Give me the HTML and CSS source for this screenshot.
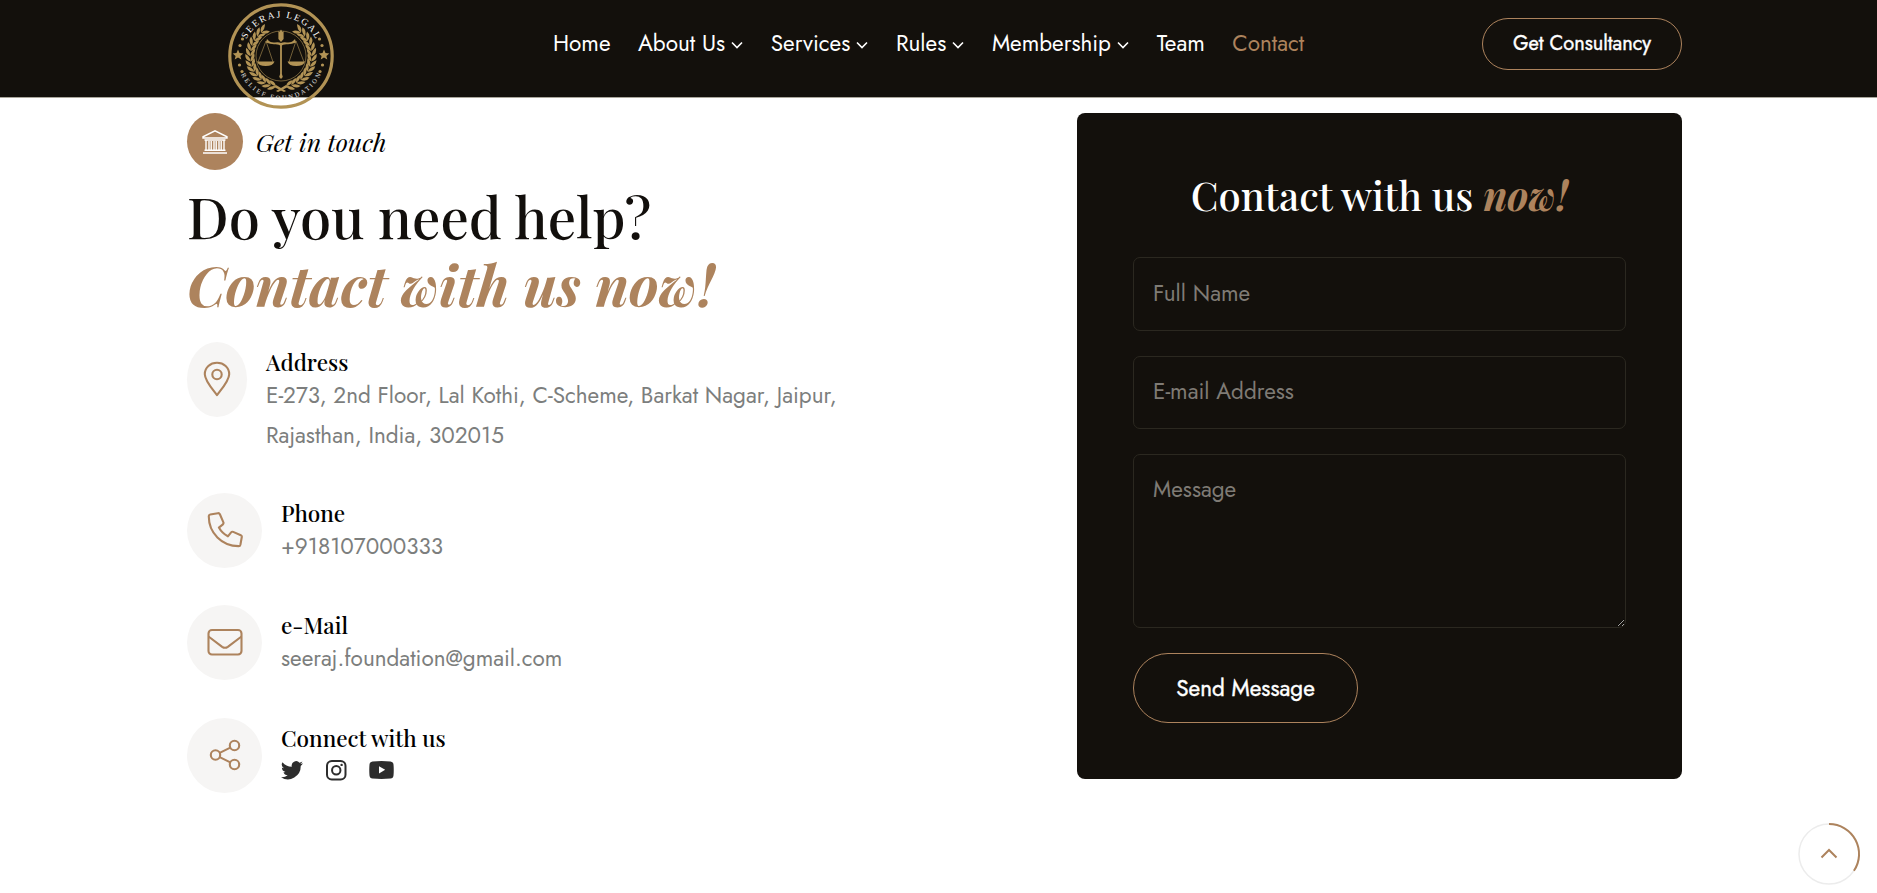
FILE: index.html
```html
<!DOCTYPE html>
<html lang="en">
<head>
<meta charset="utf-8">
<title>Contact - Seeraj Legal Relief Foundation</title>
<link rel="stylesheet" href="styles.css">
</head>
<body>
<header class="header">
  <div class="container header-row">
    <a class="logo" href="#" aria-label="Seeraj Legal Relief Foundation">
      <svg width="106" height="106" viewBox="-53 -53 106 106">
        <defs>
          <path id="arc-top" d="M-38.5 0A38.5 38.5 0 0 1 38.5 0"/>
          <path id="arc-bottom" d="M-44 0A44 44 0 0 0 44 0"/>
          <g id="leaf"><path d="M-30.500 3.500Q-36.500 1.500-35.500-4.500Q-31-2-30.500 3.500Z"/><path d="M-30.500 3.500Q-31-2-26.500-4.500Q-25.500 1-30.500 3.500Z"/></g>
          <g id="branch">
            <use href="#leaf" transform="rotate(-74)"/><use href="#leaf" transform="rotate(-64)"/><use href="#leaf" transform="rotate(-54)"/><use href="#leaf" transform="rotate(-44)"/><use href="#leaf" transform="rotate(-34)"/><use href="#leaf" transform="rotate(-24)"/><use href="#leaf" transform="rotate(-14)"/><use href="#leaf" transform="rotate(-4)"/><use href="#leaf" transform="rotate(6)"/><use href="#leaf" transform="rotate(16)"/><use href="#leaf" transform="rotate(26)"/><use href="#leaf" transform="rotate(36)"/><use href="#leaf" transform="rotate(46)"/><use href="#leaf" transform="rotate(56)"/>
            <path d="M-5 29L5 35L3 36L-7 31Z"/>
          </g>
        </defs>
        <circle r="51.200" fill="none" stroke="#b29355" stroke-width="3.200"/>
        <g fill="#b29355">
          <use href="#branch"/>
          <use href="#branch" transform="scale(-1 1)"/>
          <path id="star" d="M-43-6.500L-41.500-2.900L-37.700-2.600L-40.600-.1L-39.700 3.600L-43 1.600L-46.300 3.600L-45.400-.1L-48.300-2.600L-44.500-2.900Z"/>
          <use href="#star" transform="scale(-1 1)"/>
          <g id="dots"><circle cx="-38.500" cy="-17" r="1.600"/><circle cx="-41" cy="-10.500" r="1.600"/><circle cx="-41.500" cy="9" r="1.600"/><circle cx="-39" cy="15.500" r="1.600"/></g>
          <use href="#dots" transform="scale(-1 1)"/>
          <path d="M-.9-11H.9V18L1.800 21L0 23L-1.800 21L-.9 18ZM-2.600-25L-1.500-24L0-26.500L1.500-24L2.600-25V-17L0-14L-2.600-17Z"/>
          <path d="M-24 5.500H-6.500Q-8 10-15.300 10Q-22.500 10-24 5.500ZM24 5.500H6.500Q8 10 15.300 10Q22.500 10 24 5.500Z"/>
          <path d="M-14-17Q-11-13-6-13.500Q-2-14 0-13Q2-14 6-13.500Q11-13 14-17L15-13.500Q10-11.500 6-11.800Q2-12 0-10Q-2-12-6-11.800Q-10-11.500-15-13.500Z"/>
        </g>
        <g fill="none" stroke="#b29355" stroke-width=".6"><circle r="25"/><path d="M-15-15L-23 6M-15-15L-8 6M15-15L23 6M15-15L8 6"/></g>
        <text class="logo-top"><textPath href="#arc-top" startOffset="50%" text-anchor="middle" textLength="86">SEERAJ LEGAL</textPath></text>
        <text class="logo-bottom"><textPath href="#arc-bottom" startOffset="50%" text-anchor="middle" textLength="100">RELIEF FOUNDATION</textPath></text>
      </svg>
    </a>
    <nav class="nav">
      <a href="#">Home</a>
      <a href="#">About Us<svg class="chev" viewBox="0 0 12 8"><path d="M1 1.500L6 6.500L11 1.500"/></svg></a>
      <a href="#">Services<svg class="chev" viewBox="0 0 12 8"><path d="M1 1.500L6 6.500L11 1.500"/></svg></a>
      <a href="#">Rules<svg class="chev" viewBox="0 0 12 8"><path d="M1 1.500L6 6.500L11 1.500"/></svg></a>
      <a href="#">Membership<svg class="chev" viewBox="0 0 12 8"><path d="M1 1.500L6 6.500L11 1.500"/></svg></a>
      <a href="#">Team</a>
      <a href="#" class="active">Contact</a>
    </nav>
    <a class="btn btn-top" href="#">Get Consultancy</a>
  </div>
</header>

<main class="container main">
  <section class="info">
    <div class="eyebrow">
      <span class="eyebrow-icon"><svg width="26" height="24" viewBox="0 0 26 24"><path d="M1 8V6.800L13 .8L25 6.800V8ZM2.500 10H23.500M4 10.500V19.500M22 10.500V19.500M7 11V19.500M9.200 11V19.500M12 11V19.500M14.200 11V19.500M17 11V19.500M19.200 11V19.500M2.500 20.200H23.500M1 23H25"/></svg></span>
      <span class="eyebrow-text">Get in touch</span>
    </div>
    <h1 class="title">Do you need help?<br><em class="title-b">Contact with us now!</em></h1>
    <ul class="list">
      <li class="item item-address">
        <span class="disc disc-narrow"><svg width="36" height="36" viewBox="0 0 36 36"><path d="M18 34.200C13 27.500 5.800 19.500 5.800 13.200C5.800 6.400 11.200 1.800 18 1.800S30.200 6.400 30.200 13.200C30.200 19.500 23 27.500 18 34.200Z"/><circle cx="18" cy="13.500" r="4.700"/></svg></span>
        <div class="item-body"><h2>Address</h2><p>E-273, 2nd Floor, Lal Kothi, C-Scheme, Barkat Nagar, Jaipur,<br>Rajasthan, India, 302015</p></div>
      </li>
      <li class="item">
        <span class="disc"><svg width="36" height="36" viewBox="0 0 36 36"><path d="M1.800 4.300Q1.700 2.800 3.200 2.500L10.900 1.200Q12.300 1 12.900 2.300L16.400 10.300Q16.800 11.500 15.900 12.400L11.900 15.600Q14.900 21.200 20.900 24.300L24.100 20.400Q25 19.400 26.200 19.900L33.800 23.200Q35 23.700 34.800 25L33.400 32.700Q33.100 34.100 31.700 34.100C14.900 34.200 1.700 20.900 1.800 4.300Z"/></svg></span>
        <div class="item-body"><h2>Phone</h2><p>+918107000333</p></div>
      </li>
      <li class="item">
        <span class="disc"><svg width="36" height="36" viewBox="0 0 36 36"><rect x="1.500" y="6" width="33" height="24.500" rx="3.500"/><path d="M1.500 12.500L15.200 22.800Q18 24.800 20.800 22.800L34.500 12.500"/></svg></span>
        <div class="item-body"><h2>e-Mail</h2><p>seeraj.foundation@gmail.com</p></div>
      </li>
      <li class="item">
        <span class="disc"><svg width="36" height="36" viewBox="0 0 36 36"><circle cx="8.500" cy="18" r="4.700"/><circle cx="27.500" cy="8.500" r="4.700"/><circle cx="27.500" cy="27.500" r="4.700"/><path d="M12.700 15.900L23.300 10.600M12.700 20.100L23.300 25.400"/></svg></span>
        <div class="item-body"><h2>Connect with us</h2>
          <div class="social">
            <svg width="22" height="19" viewBox="0 0 22 19"><path d="M22 2.300Q20.800 2.900 19.400 3Q20.900 2.100 21.400.6Q20 1.400 18.500 1.700A4.500 4.500 0 0 0 10.800 5.800Q5 5.500 1.500 1.200A4.500 4.500 0 0 0 2.900 7.200Q1.800 7.200 .9 6.600Q.9 10.100 4.500 11.100Q3.500 11.300 2.500 11.200Q3.400 14.200 6.700 14.300Q3.900 16.500 0 16.200A12.800 12.800 0 0 0 19.700 4.900Q21 4 22 2.300Z"/></svg>
            <svg width="21" height="21" viewBox="0 0 21 21" fill="none" stroke="#2d2d2d" stroke-width="2"><rect x="1" y="1" width="18.500" height="18.500" rx="4.800"/><circle cx="10.250" cy="10.250" r="4.200"/><circle cx="15.600" cy="4.900" r="1.200" fill="#2d2d2d" stroke="none"/></svg>
            <svg width="25" height="18" viewBox="0 0 25 18"><path fill-rule="evenodd" d="M3.500.4Q12.500-.4 21.500.4Q24.200.6 24.500 3.500Q25 9 24.500 14.500Q24.200 17.400 21.500 17.600Q12.500 18.300 3.500 17.600Q.8 17.400 .5 14.500Q0 9 .5 3.500Q.8.6 3.500.4ZM10 5.200V12.400L16.200 8.800Z"/></svg>
          </div>
        </div>
      </li>
    </ul>
  </section>

  <form class="card">
    <h3 class="card-title">Contact with us <em class="card-b">now!</em></h3>
    <input class="field" type="text" placeholder="Full Name">
    <input class="field" type="text" placeholder="E-mail Address">
    <textarea class="field f-msg" placeholder="Message"></textarea>
    <button class="btn btn-send" type="button">Send Message</button>
  </form>
</main>

<a class="to-top" href="#" aria-label="Back to top"><svg width="64" height="64" viewBox="-32 -32 64 64"><circle r="30" fill="none" stroke="#ececec" stroke-width="1.500"/><path d="M0-30A30 30 0 0 1 24.900 16.800M-7.500 3.500L0-4L7.500 3.500"/></svg></a>
</body>
</html>
```
FILE: styles.css
```css
* { box-sizing: border-box; }
body { margin: 0; height: 893px; overflow: hidden; background: #fff; color: #120f0c; font-family: Jost, Lato, sans-serif; font-size: 22.500px; }
a { color: inherit; text-decoration: none; }
.container { width: 1495px; margin-left: 187px; }
.header { height: 98px; background: #13100c; border-bottom: 1px solid #a9a69c; }
.header-row { display: flex; align-items: flex-start; }
.logo { width: 106px; height: 106px; margin: 3px 0 0 41px; }
.logo svg { display: block; }
.logo-top { font: 9.500px "Liberation Serif", serif; fill: #fff; }
.logo-bottom { font: 6.500px "Liberation Serif", serif; fill: #e8e8e8; }
.nav { display: flex; margin: 23px 0 0 219px; line-height: 40px; color: #fff; white-space: nowrap; }
.nav a { display: flex; align-items: center; margin-right: 27.500px; }
.nav .active { color: #ad835d; margin: 0; }
.chev { width: 12px; height: 8px; margin: 4px 0 0 6.200px; fill: none; stroke: #fff; stroke-width: 1.600; }
.btn { display: flex; align-items: center; justify-content: center; border: 1px solid #ad835d; color: #fff; background: none; font-family: Jost, Lato, sans-serif; -webkit-text-stroke: .4px #fff; white-space: nowrap; padding: 0 0 1px; }
.btn-top { width: 200px; height: 52px; margin: 18px 0 0 auto; border-radius: 26px; font-size: 20px; }
.main { display: flex; justify-content: space-between; padding-top: 15px; }
.eyebrow { display: flex; align-items: center; gap: 13px; height: 57px; }
.eyebrow-icon { display: flex; align-items: center; justify-content: center; width: 56px; height: 57px; border-radius: 50%; background: #ad835d; }
.eyebrow-icon svg { fill: none; stroke: #fff; stroke-width: 1.400; }
.eyebrow-text { font: italic 25px "Playfair Display", "Liberation Serif", serif; color: #000; white-space: nowrap; }
.title { margin: 12px 0 0; font: 500 56.250px/68px "Playfair Display", "Liberation Serif", serif; white-space: nowrap; }
.title-b { color: #ad835d; font-weight: 700; }
.list { list-style: none; margin: 24px 0 0; padding: 0; display: flex; flex-direction: column; gap: 37.500px; }
.item { display: flex; gap: 19px; height: 75px; }
.item-address { height: 113.400px; }
.disc { display: flex; align-items: center; justify-content: center; width: 75px; height: 75px; border-radius: 50%; background: #f6f5f4; }
.disc-narrow { width: 60px; }
.disc svg { margin-bottom: 1px; fill: none; stroke: #ad835d; stroke-width: 2.100; stroke-linejoin: round; }
.item-body { padding-top: 8px; }
.item-body h2 { margin: 0; font: 500 22.500px/25px "Playfair Display", "Liberation Serif", serif; color: #000; white-space: nowrap; }
.item-body p { margin: 0; line-height: 40px; color: #7c7e7d; white-space: nowrap; }
.social { display: flex; align-items: center; gap: 22.500px; padding-top: 9px; fill: #2d2d2d; }
.card { width: 605px; height: 666px; padding: 56px; background: #13100c; border-radius: 8px; display: flex; flex-direction: column; }
.card-title { margin: -2px 0 34px; text-align: center; font: 500 40px/56px "Playfair Display", "Liberation Serif", serif; color: #fff; white-space: nowrap; }
.card-b { color: #ad835d; font-weight: 700; }
.field { flex: none; width: 493px; height: 73.500px; padding: 0 19px 2px; margin-bottom: 25px; border: 1px solid #2b2820; border-radius: 7px; background: none; color: #fff; font-family: Jost, Lato, sans-serif; font-size: 22.500px; outline: none; }
.field::placeholder { color: #7f7b75; opacity: 1; }
.f-msg { height: 174px; padding: 19px; line-height: 30px; }
.btn-send { width: 225px; height: 70px; border-radius: 35px; font-size: 22.500px; }
.to-top { position: fixed; right: 16px; bottom: 7px; width: 64px; height: 64px; }
.to-top path { fill: none; stroke: #ad835d; stroke-width: 2; }
```
